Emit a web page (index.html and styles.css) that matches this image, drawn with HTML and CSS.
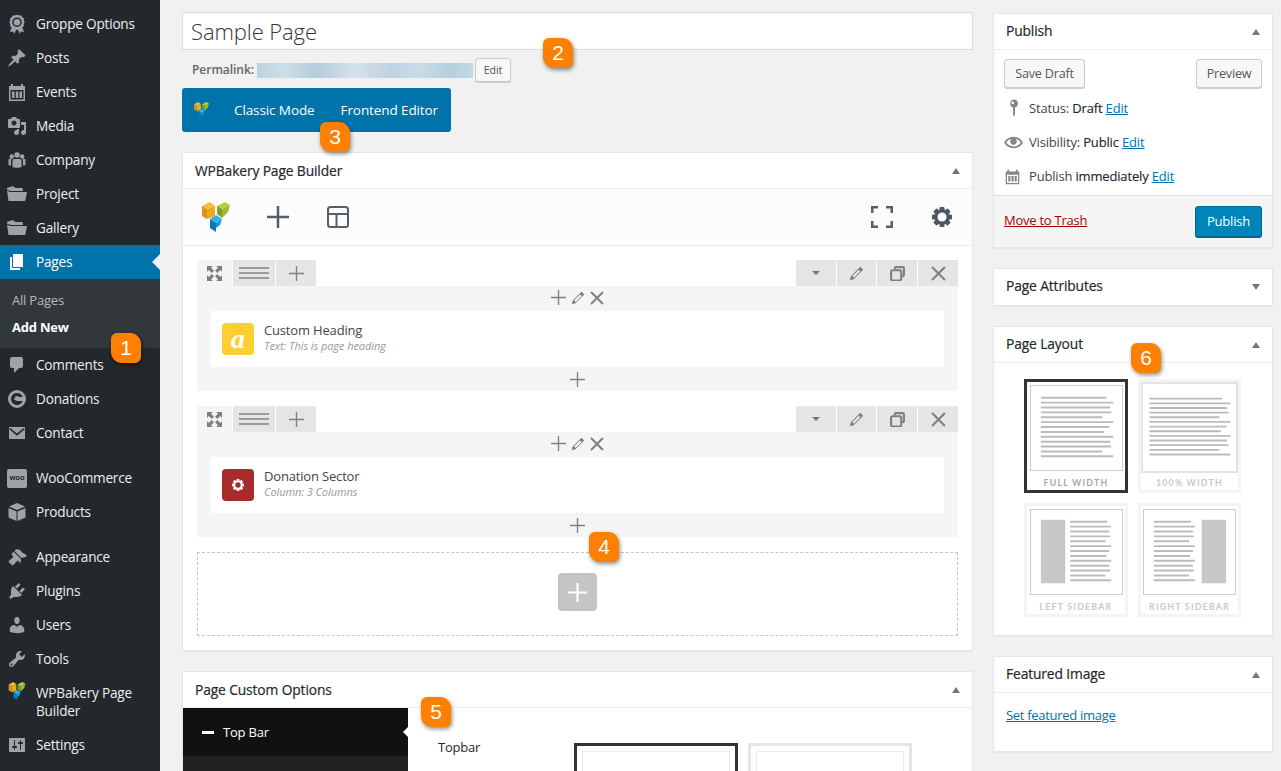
FILE: index.html
```html
<!DOCTYPE html>
<html lang="en">
<head>
<meta charset="utf-8">
<title>Sample Page</title>
<link rel="stylesheet" href="styles.css">
</head>
<body>
<svg class="sprite" aria-hidden="true">
  <symbol id="i-award" viewBox="0 0 20 20"><path d="M5 12.500l-2 5.500 3-.6 1.500 2.300 1.800-5zM15 12.500l2 5.500-3-.6-1.500 2.300-1.800-5z"/><path d="M10 .5l1.900 1 2.100-.2 1.100 1.800 1.800 1.100-.2 2.100 1 1.900-1 1.900.2 2.100-1.800 1.100-1.100 1.800-2.100-.2-1.900 1-1.900-1-2.100.2-1.100-1.800-1.800-1.100.2-2.100-1-1.900 1-1.900-.2-2.100 1.800-1.100 1.100-1.800 2.100.2z"/><circle class="cut" cx="10" cy="8.200" r="4.800"/><circle cx="10" cy="8.200" r="3.300"/></symbol>
  <symbol id="i-pin" viewBox="0 0 20 20"><path d="M10.440 3.020l1.820-1.820 6.360 6.350-1.830 1.820c-1.050-.68-2.480-.57-3.410.36l-.75.75c-.92.93-1.040 2.350-.35 3.410l-1.830 1.820-2.410-2.410-2.800 2.790c-.42.42-3.380 2.710-3.800 2.290s1.860-3.390 2.280-3.810l2.790-2.790L4.100 9.360l1.830-1.820c1.050.69 2.480.57 3.400-.36l.75-.75c.93-.92 1.050-2.350.36-3.410z"/></symbol>
  <symbol id="i-calendar" viewBox="0 0 20 20"><path fill-rule="evenodd" d="M2 4h2V2h2v2h8V2h2v2h2v15H2zM3.500 8v9.500h13V8zM5 9.500h2.500v6.500H5zM8.800 9.500h2.500v6.500H8.800zM12.500 9.500H15v6.500h-2.500z"/></symbol>
  <symbol id="i-media" viewBox="0 0 20 20"><path d="M13 11V4c0-.55-.45-1-1-1h-1.670L9 1H5L3.670 3H2c-.55 0-1 .45-1 1v7c0 .55.45 1 1 1h10c.55 0 1-.45 1-1zM7 4.500c1.380 0 2.500 1.120 2.500 2.500S8.380 9.500 7 9.500 4.500 8.380 4.500 7 5.620 4.500 7 4.500zM14 6h5v10.500c0 1.380-1.120 2.500-2.500 2.500S14 17.880 14 16.500s1.120-2.500 2.500-2.500c.17 0 .34.020.5.050V9h-3V6zm-4 8.050V13h2v3.500c0 1.380-1.120 2.500-2.500 2.500S7 17.880 7 16.500 8.120 14 9.500 14c.17 0 .34.020.5.050z"/></symbol>
  <symbol id="i-group" viewBox="0 0 20 20"><circle cx="10" cy="5" r="2.800"/><circle cx="4.800" cy="6.500" r="2.200"/><circle cx="15.200" cy="6.500" r="2.200"/><path d="M7 9h6c1 0 1.500 1 1.500 2v6c-1 1-8 1-9 0v-6C5.500 10 6 9 7 9zM1.500 10c0-1 1-1.500 2.500-1.500.5 0 .6.200.6.500-.5.600-.6 1.400-.6 2v4.500c-1 0-1.800-.2-2.500-.6zM18.500 10c0-1-1-1.500-2.500-1.500-.5 0-.6.200-.6.500.5.600.6 1.400.6 2v4.500c1 0 1.800-.2 2.500-.6z"/></symbol>
  <symbol id="i-folder" viewBox="0 0 20 20"><path d="M0 5.500V4l4-1.500 3 0 1.200 1.500h7.300L16 7H3.500z"/><path d="M3 8h17l-1.800 9H1.500L0 6.500z"/></symbol>
  <symbol id="i-page" viewBox="0 0 20 20"><path d="M6 15V2h10v13H6zm-1 1h8v2H3V5h2v11z"/></symbol>
  <symbol id="i-comment" viewBox="0 0 20 20"><path d="M5 2h9c1.100 0 2 .9 2 2v7c0 1.100-.9 2-2 2h-2l-5 5v-5H5c-1.100 0-2-.9-2-2V4c0-1.100.9-2 2-2z"/></symbol>
  <symbol id="i-donate" viewBox="0 0 20 20"><path fill-rule="evenodd" d="M10 1a9 9 0 1 1 0 18 9 9 0 0 1 0-18zM10 4a6 6 0 1 0 5.600 8H9.500l-3-2 3-2h6.100A6 6 0 0 0 10 4zm0 3a3 3 0 0 0-2.500 1.300L12 7.700A3 3 0 0 0 10 7z"/></symbol>
  <symbol id="i-mail" viewBox="0 0 20 20"><path fill-rule="evenodd" d="M2 4h16v12H2zM3.300 5l6.700 5.600L16.700 5l1 1.200L10 12.700 2.300 6.200z"/></symbol>
  <symbol id="i-box" viewBox="0 0 20 20"><path d="M10 1l8 3.500-8 3.500-8-3.500z"/><path d="M1.500 6l8 3.500V19l-8-3.500zM18.500 6l-8 3.500V19l8-3.500z"/></symbol>
  <symbol id="i-brush" viewBox="0 0 20 20"><path d="M14.480 11.060L7.410 3.990l1.500-1.500c.5-.56 2.300-.47 3.510.32 1.210.8 1.430 1.280 2.660 2.390 1.230 1.100 2.190 1.280 3.030 1.850.85.560 1.840 2.070 1.230 2.670zm-.71.71L6.700 4.700 4.930 6.470c-.39.39-.39 1.030 0 1.420l1.060 1.060c.39.39.39 1.030 0 1.420-.6.6-1.600 1.330-2.240 1.970L2.010 13.860c-.39.39-.39 1.020 0 1.410l2.830 2.830c.39.39 1.020.39 1.410 0l1.740-1.730c.64-.64 1.400-1.640 2-2.240.39-.39 1.020-.39 1.410 0l1.060 1.060c.39.39 1.030.39 1.420 0z"/></symbol>
  <symbol id="i-plug" viewBox="0 0 20 20"><path d="M13.110 4.360L9.870 7.600 8 5.730l3.240-3.240c.35-.34 1.050-.2 1.560.32.520.51.660 1.210.31 1.550zm-8 1.770l.91-1.120 9.010 9.010-1.190.84c-.71.71-2.630 1.160-3.820 1.160H6.140L4.900 17.260c-.59.59-1.540.59-2.120 0-.59-.58-.59-1.530 0-2.120l1.240-1.240v-3.880c0-1.130.4-3.190 1.090-3.890zm7.260 3.970l3.240-3.240c.34-.35 1.040-.21 1.550.31.520.51.660 1.210.31 1.550l-3.240 3.250z"/></symbol>
  <symbol id="i-user" viewBox="0 0 20 20"><path d="M10 9.250c-2.270 0-2.730-3.440-2.730-3.440C7 4.020 7.820 2 9.970 2c2.160 0 2.980 2.020 2.710 3.810 0 0-.41 3.440-2.680 3.440zm0 2.570L12.720 10c2.390 0 4.520 2.330 4.520 4.530v2.490s-3.650 1.130-7.240 1.130c-3.650 0-7.240-1.130-7.240-1.130v-2.490c0-2.250 1.940-4.480 4.470-4.480z"/></symbol>
  <symbol id="i-wrench" viewBox="0 0 20 20"><path d="M16.680 9.770c-1.340 1.340-3.300 1.670-4.950.99l-5.410 6.520c-.99.99-2.590.99-3.580 0s-.99-2.590 0-3.570l6.520-5.420c-.68-1.650-.35-3.610.99-4.950 1.280-1.280 3.120-1.620 4.720-1.060l-2.890 2.890 2.820 2.820 2.860-2.870c.53 1.580.18 3.390-1.080 4.650zM3.810 16.210c.4.390 1.040.39 1.430 0 .4-.4.400-1.040 0-1.430-.39-.4-1.030-.4-1.430 0-.39.39-.39 1.030 0 1.430z"/></symbol>
  <symbol id="i-sliders" viewBox="0 0 20 20"><path d="M18 16V4c0-.55-.45-1-1-1H3c-.55 0-1 .45-1 1v12c0 .55.45 1 1 1h14c.55 0 1-.45 1-1zM8 11h1c.55 0 1 .45 1 1s-.45 1-1 1H8v1.500c0 .28-.22.5-.5.5s-.5-.22-.5-.5V13H6c-.55 0-1-.45-1-1s.45-1 1-1h1V5.500c0-.28.22-.5.5-.5s.5.22.5.5V11zm5-2h-1c-.55 0-1-.45-1-1s.45-1 1-1h1V5.500c0-.28.22-.5.5-.5s.5.22.5.5V7h1c.55 0 1 .45 1 1s-.45 1-1 1h-1v5.500c0 .28-.22.5-.5.5s-.5-.22-.5-.5V9z"/></symbol>
  <symbol id="i-vc" viewBox="0 0 28 30"><path fill="#f9bd35" d="M0 4l8-4 5 4-8 3z"/><path fill="#dc9219" d="M0 4l5 3v10l-5-3z"/><path fill="#eba821" d="M5 7l8-3v10l-8 3z"/><path fill="#b5d048" d="M15 4l8-4 5 3-8 4z"/><path fill="#7e9f2a" d="M15 4l5 3v9l-5-4z"/><path fill="#9bbb35" d="M20 7l8-4-2 7-6 6z"/><path fill="#2bb4ee" d="M8 17l6-4 6 4-6 4z"/><path fill="#0c78b2" d="M8 17l6 4v9l-6-4z"/><path fill="#1696d4" d="M14 21l6-4-2 6-4 3z"/></symbol>
  <symbol id="i-plus" viewBox="0 0 22 22"><path d="M11 0v22M0 11h22"/></symbol>
  <symbol id="i-pencil" viewBox="0 0 14 14"><path d="M10.500.8l2.700 2.700-8.800 8.800-3.600.9.900-3.600zM9 3.400l1.600 1.600-5.900 5.900-1.600-1.600z" fill-rule="evenodd"/></symbol>
  <symbol id="i-x" viewBox="0 0 14 14"><path d="M1 1l12 12M13 1L1 13"/></symbol>
  <symbol id="i-expand" viewBox="0 0 14 14"><path d="M0 0h5.500L3.800 1.700 6.500 4.400 4.400 6.500 1.700 3.800 0 5.500zM14 0v5.500l-1.700-1.700-2.700 2.700-2.100-2.100 2.700-2.700L8.500 0zM0 14V8.500l1.700 1.700 2.700-2.700 2.100 2.100-2.700 2.700L5.500 14zM14 14H8.500l1.700-1.700-2.700-2.700 2.100-2.100 2.700 2.700L14 8.500z"/></symbol>
  <symbol id="i-copy" viewBox="0 0 14 14"><path d="M4.500 3V2a1 1 0 0 1 1-1H12a1 1 0 0 1 1 1v6.500a1 1 0 0 1-1 1h-1.300"/><rect x="1" y="4" width="9.500" height="9.500" rx="1.500"/></symbol>
  <symbol id="i-tpl" viewBox="0 0 22 22"><rect x="1" y="1" width="20" height="20" rx="2.500"/><path d="M1 8h20M9.500 8v13"/></symbol>
  <symbol id="i-full" viewBox="0 0 22 22"><path d="M1 7V1h6M15 1h6v6M21 15v6h-6M7 21H1v-6"/></symbol>
  <symbol id="i-gear" viewBox="0 0 20 20"><rect x="7.500" y="0" width="5" height="20" rx="1.200"/><rect x="7.500" y="0" width="5" height="20" rx="1.200" transform="rotate(45 10 10)"/><rect x="7.500" y="0" width="5" height="20" rx="1.200" transform="rotate(90 10 10)"/><rect x="7.500" y="0" width="5" height="20" rx="1.200" transform="rotate(135 10 10)"/><circle cx="10" cy="10" r="7.500"/><circle class="hole" cx="10" cy="10" r="4.500"/></symbol>
  <symbol id="i-loc" viewBox="0 0 14 20"><path fill-rule="evenodd" d="M7 0a4.800 4.800 0 0 1 1.200 9.400V19H6V9.400A4.800 4.800 0 0 1 7 0zM5.500 2.500a1.500 1.500 0 1 0 0 3 1.500 1.500 0 0 0 0-3z"/></symbol>
  <symbol id="i-eye" viewBox="0 0 20 20"><path d="M19.700 9.400C17.700 6 14 3.900 10 3.900S2.300 6 .3 9.400L0 10l.3.6c2 3.400 5.700 5.500 9.700 5.500s7.700-2.100 9.700-5.500l.3-.6-.3-.6zM10 14.100c-3.100 0-6-1.600-7.700-4.100C3.600 8 5.700 6.600 8 6.100c-.9.600-1.500 1.700-1.500 2.900 0 1.900 1.600 3.500 3.500 3.500s3.500-1.600 3.500-3.500c0-1.200-.6-2.300-1.500-2.900 2.300.5 4.400 1.900 5.700 3.900-1.700 2.500-4.600 4.100-7.700 4.100z"/></symbol>
  <symbol id="l-full" viewBox="0 0 93 86"><path d="M10 12h67M10 17h74M10 22h71M10 27h72M10 32h63M10 37h74M10 42h70M10 47h65M10 52h74M10 57h71M10 62h72M10 67h63M10 72h74"/></symbol>
  <symbol id="l-wide" viewBox="0 0 100 88"><path d="M7 13h78M7 18h87M7 23h83M7 28h85M7 33h75M7 38h87M7 43h83M7 48h77M7 53h87M7 58h83M7 63h85M7 68h75M7 73h87"/></symbol>
  <symbol id="l-left" viewBox="0 0 93 86"><rect class="solid" x="10" y="10" width="25" height="65"/><path d="M40 12h38M40 17h42M40 22h40M40 27h41M40 32h36M40 37h42M40 42h40M40 47h37M40 52h42M40 57h40M40 62h41M40 67h36M40 72h42"/></symbol>
  <symbol id="l-right" viewBox="0 0 93 86"><rect class="solid" x="59" y="10" width="25" height="65"/><path d="M10 12h38M10 17h42M10 22h40M10 27h41M10 32h36M10 37h42M10 42h40M10 47h37M10 52h42M10 57h40M10 62h41M10 67h36M10 72h42"/></symbol>
</svg>

<div class="shell">
  <nav class="adminmenu">
    <a class="menu-item"><svg class="mi"><use href="#i-award"/></svg><span>Groppe Options</span></a>
    <a class="menu-item"><svg class="mi"><use href="#i-pin"/></svg><span>Posts</span></a>
    <a class="menu-item"><svg class="mi"><use href="#i-calendar"/></svg><span>Events</span></a>
    <a class="menu-item"><svg class="mi"><use href="#i-media"/></svg><span>Media</span></a>
    <a class="menu-item"><svg class="mi"><use href="#i-group"/></svg><span>Company</span></a>
    <a class="menu-item"><svg class="mi"><use href="#i-folder"/></svg><span>Project</span></a>
    <a class="menu-item"><svg class="mi"><use href="#i-folder"/></svg><span>Gallery</span></a>
    <a class="menu-item is-current"><svg class="mi"><use href="#i-page"/></svg><span>Pages</span></a>
    <div class="submenu">
      <a class="sub-item">All Pages</a>
      <a class="sub-item is-on">Add New</a>
    </div>
    <a class="menu-item"><svg class="mi"><use href="#i-comment"/></svg><span>Comments</span></a>
    <a class="menu-item"><svg class="mi"><use href="#i-donate"/></svg><span>Donations</span></a>
    <a class="menu-item"><svg class="mi"><use href="#i-mail"/></svg><span>Contact</span></a>
    <div class="menu-sep"></div>
    <a class="menu-item"><span class="woo">woo</span><span>WooCommerce</span></a>
    <a class="menu-item"><svg class="mi"><use href="#i-box"/></svg><span>Products</span></a>
    <div class="menu-sep"></div>
    <a class="menu-item"><svg class="mi"><use href="#i-brush"/></svg><span>Appearance</span></a>
    <a class="menu-item"><svg class="mi"><use href="#i-plug"/></svg><span>Plugins</span></a>
    <a class="menu-item"><svg class="mi"><use href="#i-user"/></svg><span>Users</span></a>
    <a class="menu-item"><svg class="mi"><use href="#i-wrench"/></svg><span>Tools</span></a>
    <a class="menu-item is-tall"><svg class="mi mi-color"><use href="#i-vc"/></svg><span>WPBakery Page Builder</span></a>
    <a class="menu-item"><svg class="mi"><use href="#i-sliders"/></svg><span>Settings</span></a>
  </nav>

  <main class="editor">
    <div class="title-input">Sample Page</div>
    <div class="permalink">
      <strong>Permalink:</strong>
      <span class="blurred"></span>
      <button class="btn-small">Edit</button>
    </div>
    <div class="mode-bar">
      <svg class="mode-logo"><use href="#i-vc"/></svg>
      <span class="mode-link first">Classic Mode</span>
      <span class="mode-link">Frontend Editor</span>
    </div>

    <section class="metabox builder">
      <header class="box-head"><h2>WPBakery Page Builder</h2><i class="caret up"></i></header>
      <div class="toolbar">
        <svg class="tb-logo"><use href="#i-vc"/></svg>
        <svg class="tb-icon tb-plus"><use href="#i-plus"/></svg>
        <svg class="tb-icon tb-tpl"><use href="#i-tpl"/></svg>
        <span class="tb-space"></span>
        <svg class="tb-icon tb-full"><use href="#i-full"/></svg>
        <svg class="tb-gear"><use href="#i-gear"/></svg>
      </div>
      <div class="canvas">
        <article class="vc-row">
          <div class="row-controls">
            <span class="rc rc-move"><svg class="ic-fill"><use href="#i-expand"/></svg></span>
            <span class="rc rc-lines"><i></i><i></i><i></i></span>
            <span class="rc rc-add"><svg class="ic-line"><use href="#i-plus"/></svg></span>
            <span class="rc-space"></span>
            <span class="rc rc-r rc-drop"><i class="mini-caret"></i></span>
            <span class="rc rc-r rc-edit"><svg class="ic-fill"><use href="#i-pencil"/></svg></span>
            <span class="rc rc-r"><svg class="ic-line"><use href="#i-copy"/></svg></span>
            <span class="rc rc-r"><svg class="ic-line"><use href="#i-x"/></svg></span>
          </div>
          <div class="row-body">
            <div class="col-controls">
              <svg class="ic-line cc-plus"><use href="#i-plus"/></svg>
              <svg class="ic-fill cc-small"><use href="#i-pencil"/></svg>
              <svg class="ic-line cc-small"><use href="#i-x"/></svg>
            </div>
            <div class="element">
              <span class="el-icon el-yellow">a</span>
              <div class="el-text"><div class="el-title">Custom Heading</div><div class="el-sub">Text: This is page heading</div></div>
            </div>
            <div class="col-add"><svg class="ic-line cc-plus"><use href="#i-plus"/></svg></div>
          </div>
        </article>
        <article class="vc-row">
          <div class="row-controls">
            <span class="rc rc-move"><svg class="ic-fill"><use href="#i-expand"/></svg></span>
            <span class="rc rc-lines"><i></i><i></i><i></i></span>
            <span class="rc rc-add"><svg class="ic-line"><use href="#i-plus"/></svg></span>
            <span class="rc-space"></span>
            <span class="rc rc-r rc-drop"><i class="mini-caret"></i></span>
            <span class="rc rc-r rc-edit"><svg class="ic-fill"><use href="#i-pencil"/></svg></span>
            <span class="rc rc-r"><svg class="ic-line"><use href="#i-copy"/></svg></span>
            <span class="rc rc-r"><svg class="ic-line"><use href="#i-x"/></svg></span>
          </div>
          <div class="row-body">
            <div class="col-controls">
              <svg class="ic-line cc-plus"><use href="#i-plus"/></svg>
              <svg class="ic-fill cc-small"><use href="#i-pencil"/></svg>
              <svg class="ic-line cc-small"><use href="#i-x"/></svg>
            </div>
            <div class="element">
              <span class="el-icon el-red"><svg class="el-gear"><use href="#i-gear"/></svg></span>
              <div class="el-text"><div class="el-title">Donation Sector</div><div class="el-sub">Column: 3 Columns</div></div>
            </div>
            <div class="col-add"><svg class="ic-line cc-plus"><use href="#i-plus"/></svg></div>
          </div>
        </article>
        <div class="dropzone"><span class="add-big"><svg><use href="#i-plus"/></svg></span></div>
      </div>
    </section>

    <section class="metabox options">
      <header class="box-head"><h2>Page Custom Options</h2><i class="caret up"></i></header>
      <div class="opt-body">
        <div class="opt-nav">
          <div class="opt-tab"><i class="dash"></i>Top Bar</div>
          <div class="opt-rest"></div>
        </div>
        <div class="opt-pane">
          <span class="opt-label">Topbar</span>
          <div class="opt-choices">
            <span class="opt-choice is-on"><i></i></span>
            <span class="opt-choice"><i></i></span>
          </div>
        </div>
      </div>
    </section>
  </main>

  <aside class="side">
    <section class="metabox publish">
      <header class="box-head"><h2>Publish</h2><i class="caret up"></i></header>
      <div class="pub-actions"><button class="btn btn-save">Save Draft</button><button class="btn btn-preview">Preview</button></div>
      <div class="pub-line"><svg class="pl-icon pl-loc"><use href="#i-loc"/></svg><span>Status: <b>Draft</b> <a>Edit</a></span></div>
      <div class="pub-line"><svg class="pl-icon pl-eye"><use href="#i-eye"/></svg><span>Visibility: <b>Public</b> <a>Edit</a></span></div>
      <div class="pub-line"><svg class="pl-icon pl-cal"><use href="#i-calendar"/></svg><span>Publish <b>immediately</b> <a>Edit</a></span></div>
      <div class="pub-foot"><a class="trash">Move to Trash</a><button class="btn-primary">Publish</button></div>
    </section>
    <section class="metabox closed">
      <header class="box-head"><h2>Page Attributes</h2><i class="caret down"></i></header>
    </section>
    <section class="metabox">
      <header class="box-head"><h2>Page Layout</h2><i class="caret up"></i></header>
      <div class="layouts">
        <div class="tile is-on"><svg class="thumb"><use href="#l-full"/></svg><span>FULL WIDTH</span></div>
        <div class="tile tile-wide"><svg class="thumb"><use href="#l-wide"/></svg><span>100% WIDTH</span></div>
        <div class="tile"><svg class="thumb"><use href="#l-left"/></svg><span>LEFT SIDEBAR</span></div>
        <div class="tile"><svg class="thumb"><use href="#l-right"/></svg><span>RIGHT SIDEBAR</span></div>
      </div>
    </section>
    <section class="metabox featured">
      <header class="box-head"><h2>Featured Image</h2><i class="caret up"></i></header>
      <div class="feat-body"><a>Set featured image</a></div>
    </section>
  </aside>
</div>

<span class="badge b1">1</span>
<span class="badge b2">2</span>
<span class="badge b3">3</span>
<span class="badge b4">4</span>
<span class="badge b5">5</span>
<span class="badge b6">6</span>
</body>
</html>
```

FILE: styles.css
```css
* { box-sizing: border-box; }
html, body { margin: 0; height: 100%; overflow: hidden; }
body { background: #f1f1f1; color: #444; font: 13px/1.4 "Open Sans", "Noto Sans", sans-serif; position: relative; letter-spacing: -0.2px; }
.sprite { display: none; }
a { color: #0073aa; text-decoration: underline; }
h2 { margin: 0; font-size: 13.8px; font-weight: 400; color: #23282d; -webkit-text-stroke: 0.2px #23282d; letter-spacing: -0.12px; }
button { font-family: inherit; letter-spacing: inherit; }

.shell { display: flex; height: 771px; overflow: hidden; }

/* admin menu */
.adminmenu { width: 160px; flex: none; background: #23282d; padding-top: 7px; --hole: #23282d; }
.menu-item { display: flex; align-items: center; height: 34px; padding-left: 7px; gap: 9px; color: #eee; font-size: 13.6px; text-decoration: none; position: relative; }
.menu-item.is-tall { height: 52px; line-height: 18px; }
.mi { width: 20px; height: 20px; flex: none; fill: #9ea3a8; }
.cut { fill: #23282d; }
.hole { fill: var(--hole); }
.is-tall .mi { align-self: flex-start; margin-top: 6px; height: 18px; }
.menu-item.is-current { background: #0073aa; color: #fff; }
.is-current .mi { fill: #fff; }
.is-current::after { content: ""; position: absolute; right: 0; top: 9px; border: 8px solid transparent; border-right-color: #f1f1f1; border-left-width: 0; }
.submenu { background: #32373c; height: 69px; padding: 8px 0 0 12px; }
.sub-item { display: block; height: 27px; line-height: 27px; color: #b4b9be; text-decoration: none; font-size: 13px; }
.sub-item.is-on { color: #fff; font-weight: 700; }
.menu-sep { height: 11px; }
.woo { width: 20px; height: 19px; flex: none; background: #9ea3a8; border-radius: 2px; color: #23282d; font: 700 7.500px/18px "Liberation Sans", sans-serif; text-align: center; letter-spacing: 0; }

/* editor column */
.editor { width: 791px; margin-left: 22px; padding-top: 12px; flex: none; }
.title-input { height: 38px; background: #fff; border: 1px solid #ddd; padding: 0 8px; font-size: 22px; line-height: 37px; color: #32373c; font-weight: 300; letter-spacing: -0.1px; box-shadow: inset 0 1px 2px rgba(0,0,0,.04); }
.permalink { display: flex; align-items: center; height: 24px; margin-top: 8px; padding-left: 10px; color: #666; font-size: 12px; letter-spacing: -0.03px; }
.permalink strong { font-weight: 600; margin-right: 3px; }
.blurred { width: 216px; height: 15px; background: linear-gradient(90deg, #bcd3e2, #cfdfe9 12%, #b4ccdc 28%, #d6e2ea 45%, #bdd3e1 62%, #cbdce7 75%, #b5cfdf 90%, #c5d8e5); }
.btn-small { width: 36px; height: 24px; margin-left: 2px; padding: 0; background: #f7f7f7; border: 1px solid #ccc; border-radius: 3px; box-shadow: 0 1px 0 #ccc; font-size: 10.5px; color: #555; }
.mode-bar { display: flex; align-items: center; width: 269px; height: 44px; margin-top: 6px; background: #0073aa; border-radius: 3px; color: #fff; font-size: 13.5px; padding-left: 11px; letter-spacing: -0.1px; }
.mode-logo { width: 17px; height: 16px; flex: none; }
.mode-link { margin-left: 26px; }
.mode-link.first { margin-left: 24px; }

/* metabox */
.metabox { background: #fff; border: 1px solid #e5e5e5; box-shadow: 0 1px 1px rgba(0,0,0,.04); margin-bottom: 20px; }
.box-head { display: flex; align-items: center; justify-content: space-between; height: 36px; padding: 0 12px; border-bottom: 1px solid #eee; }
.side h2 { padding-bottom: 2px; }
.caret { width: 0; height: 0; border: 4.500px solid transparent; border-top-width: 0; border-bottom: 6px solid #72777c; }
.caret.down { border-bottom-width: 0; border-top: 6px solid #72777c; border-left-width: 4.500px; }
.metabox.builder { height: 499px; margin-top: 20px; }
.metabox.options { height: 200px; margin-top: 0; }

.toolbar { display: flex; align-items: center; height: 57px; background: #fcfcfc; border-bottom: 1px solid #eee; padding: 0 20px 0 19px; --hole: #fcfcfc; }
.tb-logo { width: 28px; height: 30px; flex: none; }
.tb-icon { width: 22px; height: 22px; fill: none; stroke: #555f69; flex: none; }
.tb-plus { margin-left: 37px; stroke-width: 2.500px; }
.tb-tpl { margin-left: 38px; stroke-width: 2px; }
.tb-space { flex: 1; }
.tb-full { stroke-width: 3px; }
.tb-gear { width: 20px; height: 20px; margin-left: 39px; fill: #4d5661; flex: none; }

.canvas { padding: 14px 14px 0; }
.vc-row { margin-bottom: 15px; }
.row-controls { display: flex; height: 26px; gap: 1px; }
.rc { display: flex; align-items: center; justify-content: center; background: #e5e5e5; width: 40px; }
.rc-move { width: 35px; background: #f4f4f4; }
.rc-lines { width: 42px; flex-direction: column; gap: 3px; }
.rc-lines i { display: block; width: 30px; height: 2px; background: #9a9a9a; }
.rc-add { width: 40px; }
.rc-space { flex: 1; }
.rc-edit { width: 39px; }
.ic-line { fill: none; stroke: #808080; stroke-width: 2px; width: 15px; height: 15px; }
.ic-fill { fill: #7e7e7e; width: 15px; height: 15px; }
.mini-caret { width: 0; height: 0; border: 4px solid transparent; border-bottom-width: 0; border-top: 4px solid #777; }
.row-body { background: #f5f5f5; height: 105px; padding: 0 14px; }
.col-controls { display: flex; align-items: center; justify-content: center; gap: 5px; height: 25px; padding-bottom: 2px; }
.cc-plus { width: 15px; height: 15px; stroke-width: 2px; }
.cc-small { width: 14px; height: 14px; }
.element { display: flex; align-items: center; gap: 10px; height: 56px; background: #fff; padding-left: 11px; }
.el-icon { width: 32px; height: 32px; border-radius: 4px; display: flex; align-items: center; justify-content: center; color: #fff; flex: none; }
.el-yellow { background: #ffce33; font: italic 700 28px/32px "Liberation Serif", serif; letter-spacing: 0; }
.el-red { background: #a82a2a; --hole: #a82a2a; }
.el-gear { width: 12px; height: 12px; fill: #fff; }
.el-text { margin-top: -4px; }
.el-title { font-size: 13px; line-height: 17px; color: #444; letter-spacing: -0.17px; }
.el-sub { font-size: 11px; line-height: 14px; color: #999; font-style: italic; letter-spacing: -0.08px; }
.col-add { display: flex; align-items: center; justify-content: center; height: 24px; }
.dropzone { display: flex; align-items: center; justify-content: center; height: 84px; border: 1px dashed #c5c5c5; padding-bottom: 4px; }
.add-big { display: flex; align-items: center; justify-content: center; width: 39px; height: 38px; background: #c5c5c5; border-radius: 4px; }
.add-big svg { width: 19px; height: 19px; fill: none; stroke: #fff; stroke-width: 2.500px; }

/* options */
.opt-body { display: flex; }
.opt-nav { width: 225px; flex: none; background: #111; position: relative; height: 163px; }
.opt-tab { display: flex; align-items: center; height: 48px; padding-left: 19px; color: #fff; font-size: 13px; gap: 9px; }
.opt-tab::after { content: ""; position: absolute; right: 0; top: 19px; border: 5px solid transparent; border-right-color: #fff; border-left-width: 0; }
.dash { width: 12px; height: 3px; background: #fff; flex: none; }
.opt-rest { height: 115px; background: #222; }
.opt-pane { flex: 1; display: flex; align-items: flex-start; padding: 35px 0 0 30px; }
.opt-label { width: 136px; color: #23282d; font-size: 13px; line-height: 9px; }
.opt-choices { display: flex; gap: 10px; }
.opt-choice { width: 164px; height: 100px; border: 3px solid #e5e5e5; padding: 5px; }
.opt-choice.is-on { border-color: #333; }
.opt-choice i { display: block; height: 80px; border: 1px solid #ececec; border-bottom: 0; }

/* side column */
.side { width: 280px; margin-left: 20px; padding-top: 13px; flex: none; }
.pub-actions { display: flex; justify-content: space-between; padding: 9px 10px 0; }
.btn { height: 29px; padding: 0; background: #f7f7f7; border: 1px solid #ccc; border-radius: 3px; box-shadow: 0 1px 0 #ccc; color: #555; font-size: 12.600px; }
.btn-save { width: 81px; }
.btn-preview { width: 66px; }
.pub-line { display: flex; align-items: center; height: 34px; padding-left: 10px; color: #444; font-size: 13px; letter-spacing: -0.17px; }
.pub-actions + .pub-line { margin-top: 3px; }
.pub-line b { font-weight: 400; color: #23282d; -webkit-text-stroke: 0.15px #23282d; }
.pl-icon { flex: none; fill: #82878c; }
.pl-loc { height: 18px; width: 12px; margin: 0 9px 0 4px; }
.pl-eye { height: 19px; width: 19px; margin-right: 6px; }
.pl-cal { height: 17px; width: 17px; margin-right: 8px; }
.pub-foot { display: flex; align-items: center; justify-content: space-between; height: 52px; margin-top: 2px; padding: 0 10px; background: #f5f5f5; border-top: 1px solid #ddd; }
.trash { color: #a00; margin-top: -2px; letter-spacing: -0.25px; }
.btn-primary { height: 31px; width: 67px; padding: 0 0 2px; background: #0085ba; border: 1px solid #006799; border-radius: 3px; color: #fff; font-size: 13px; box-shadow: 0 1px 0 #006799; }
.closed .box-head { border-bottom: 0; }
.layouts { display: grid; grid-template-columns: 104px 103px; gap: 10px; padding: 16px 0 18px 30px; }
.tile { height: 114px; border: 3px solid #f4f4f4; display: flex; flex-direction: column; align-items: center; font: 700 8.800px/1 "Lato", "Open Sans", sans-serif; letter-spacing: 1.200px; color: #c9c9c9; padding-top: 3px; }
.tile span { margin-top: 8px; }
.tile.is-on { border-color: #333; color: #a8a8a8; }
.thumb { width: 93px; height: 86px; border: 1px solid #ccc; fill: #c8c8c8; stroke: #bbb; stroke-width: 2px; flex: none; }
.solid { stroke: none; }
.tile-wide { padding-top: 0; }
.tile-wide .thumb { width: 97px; height: 91px; border: 2px solid #e3e3e3; }
.tile-wide span { margin-top: 6px; }
.featured .feat-body { padding: 13px 12px; height: 58px; letter-spacing: -0.3px; }

/* badges float above the page */
.badge { position: absolute; width: 30px; height: 30px; background: #ff8000; color: #fff; border-radius: 6px 11px 6px 11px; font: 21px/30px "Liberation Sans", sans-serif; letter-spacing: 0; text-align: center; box-shadow: 1px 2px 4px rgba(0,0,0,.45); }
.b1 { left: 111px; top: 333px; }
.b2 { left: 543px; top: 38px; }
.b3 { left: 320px; top: 122px; }
.b4 { left: 589px; top: 532px; }
.b5 { left: 421px; top: 697px; }
.b6 { left: 1131px; top: 343px; }
```
